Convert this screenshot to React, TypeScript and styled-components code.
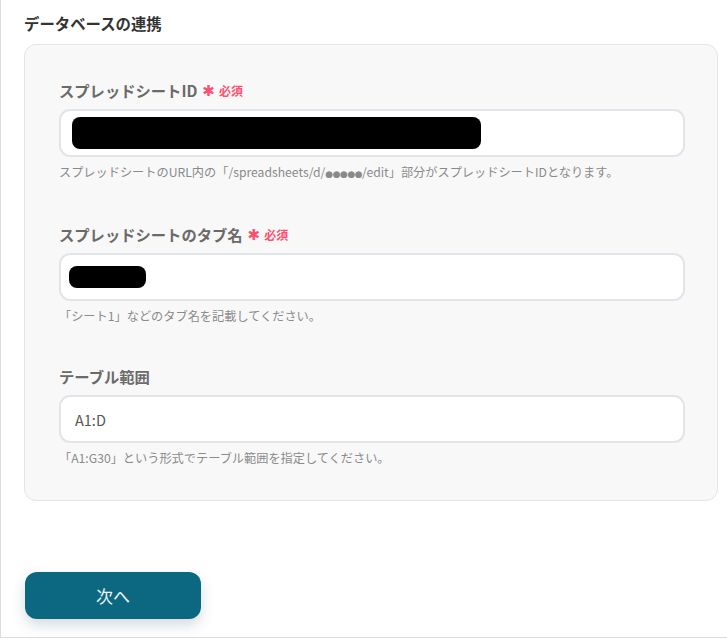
import styled, { createGlobalStyle } from "styled-components";

const GlobalStyle = createGlobalStyle`
  html, body {
    margin: 0;
    padding: 0;
    background: #ffffff;
  }
  body {
    font-family: "Noto Sans CJK JP", "Noto Sans", sans-serif;
  }
`;

const Page = styled.div`
  box-sizing: border-box;
  width: 727px;
  height: 638px;
  border-left: 1px solid #dcdcdc;
  border-bottom: 1px solid #dcdcdc;
  padding: 12px 10px 0 23px;
  display: flex;
  flex-direction: column;
`;

const SectionTitle = styled.h2`
  margin: 0 0 10px;
  font-size: 15.4px;
  line-height: 22px;
  font-weight: 700;
  color: #333333;
`;

const Panel = styled.div`
  box-sizing: border-box;
  width: 694px;
  background: #f8f8f9;
  border: 1px solid #e3e5e8;
  border-radius: 12px;
  padding: 33px 33px 33px 34px;
  display: flex;
  flex-direction: column;
  gap: 39px;
`;

const Field = styled.div`
  display: flex;
  flex-direction: column;
`;

const Label = styled.div`
  display: flex;
  align-items: center;
  height: 24px;
  margin-bottom: 7px;
  font-size: 15.3px;
  font-weight: 700;
  color: #6a6a6a;
`;

const Required = styled.span`
  margin-left: 5px;
  font-size: 12px;
  font-weight: 700;
  color: #ff4f6e;
  display: flex;
  align-items: center;
  gap: 4px;
`;

const Star = styled.span`
  font-family: "DejaVu Sans", sans-serif;
  font-size: 15px;
  font-weight: 700;
  line-height: 1;
  position: relative;
  top: 1px;
`;

const InputBox = styled.div`
  box-sizing: border-box;
  width: 626px;
  height: 48px;
  background: #ffffff;
  border: 2px solid #e1e4e8;
  border-radius: 11px;
  display: flex;
  align-items: center;
  padding: 0 14px;
  font-size: 14.5px;
  color: #555555;
`;

const Redacted = styled.div<{ w: number; h: number; offset: number }>`
  width: ${(p) => p.w}px;
  height: ${(p) => p.h}px;
  margin-left: ${(p) => p.offset}px;
  background: #000000;
  border-radius: 8px;
`;

const Help = styled.div`
  margin-top: 6px;
  font-size: 12.2px;
  line-height: 18px;
  color: #8a8a8a;
  white-space: nowrap;
`;

const Dots = styled.span`
  font-family: "DejaVu Sans", sans-serif;
  font-size: 9px;
  letter-spacing: -0.5px;
`;

const Footer = styled.div`
  margin-top: 71px;
  display: flex;
`;

const NextButton = styled.button`
  width: 176px;
  height: 47px;
  margin-left: 1px;
  border: none;
  border-radius: 12px;
  background: #0b6880;
  color: #eef4f6;
  font-family: "Noto Sans CJK JP", "Noto Sans", sans-serif;
  font-size: 17px;
  box-shadow: 0 6px 14px rgba(20, 50, 70, 0.18);
  cursor: pointer;
`;

export default function App() {
  return (
    <>
      <GlobalStyle />
      <Page>
        <SectionTitle>データベースの連携</SectionTitle>
        <Panel>
          <Field>
            <Label>
              スプレッドシートID
              <Required>
                <Star>✱</Star>必須
              </Required>
            </Label>
            <InputBox>
              <Redacted w={409} h={32} offset={-3} />
            </InputBox>
            <Help>
              スプレッドシートのURL内の「/spreadsheets/d/<Dots>●●●●●</Dots>/edit」部分がスプレッドシートIDとなります。
            </Help>
          </Field>
          <Field>
            <Label>
              スプレッドシートのタブ名
              <Required>
                <Star>✱</Star>必須
              </Required>
            </Label>
            <InputBox>
              <Redacted w={77} h={22} offset={-6} />
            </InputBox>
            <Help>「シート1」などのタブ名を記載してください。</Help>
          </Field>
          <Field>
            <Label>テーブル範囲</Label>
            <InputBox>
              <span>A1:D</span>
            </InputBox>
            <Help>「A1:G30」という形式でテーブル範囲を指定してください。</Help>
          </Field>
        </Panel>
        <Footer>
          <NextButton>次へ</NextButton>
        </Footer>
      </Page>
    </>
  );
}
